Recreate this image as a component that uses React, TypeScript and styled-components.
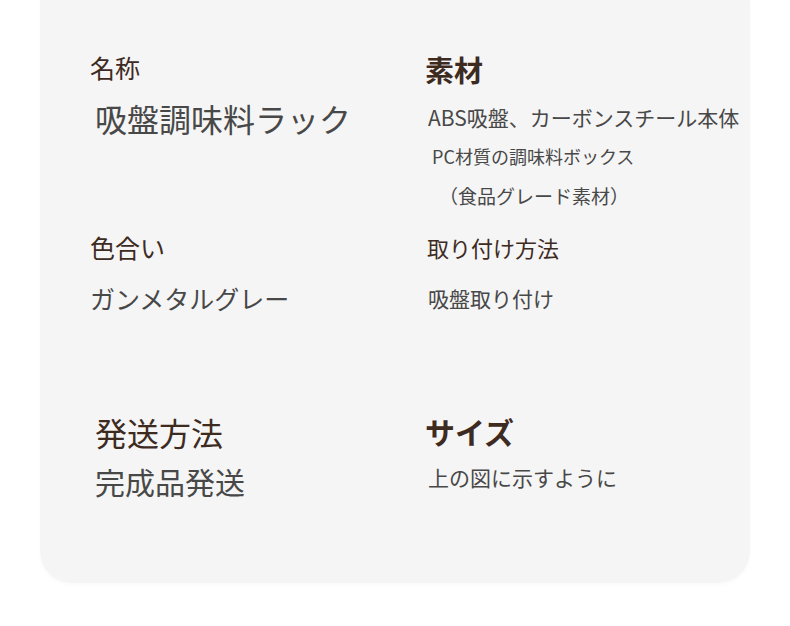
import React from 'react';
import styled, { createGlobalStyle } from 'styled-components';

const GlobalStyle = createGlobalStyle`
  html, body {
    margin: 0;
    padding: 0;
    background: #ffffff;
  }
  body {
    font-family: "Noto Sans CJK JP", "Noto Sans", sans-serif;
  }
`;

const Page = styled.div`
  width: 790px;
  height: 626px;
  overflow: hidden;
  background: #ffffff;
`;

const Card = styled.div`
  margin-left: 40px;
  width: 710px;
  height: 583px;
  box-sizing: border-box;
  padding: 56px 0 0 50px;
  background: #f5f5f5;
  border-radius: 0 0 32px 32px;
  box-shadow: 0 2px 5px rgba(0, 0, 0, 0.025);
`;

const SpecGrid = styled.div`
  display: grid;
  grid-template-columns: 335px 1fr;
  grid-template-rows: 152px 76px auto;
  row-gap: 29px;
  &> :nth-child(5), &> :nth-child(6) {
    margin-top: 74px;
  }
`;

const Cell = styled.div`
  display: flex;
  flex-direction: column;
  align-items: flex-start;
`;

const Label = styled.div<{ $size: number; $bold?: boolean; $gap?: number; $indent?: number }>`
  font-size: ${p => p.$size}px;
  line-height: ${p => p.$size}px;
  font-weight: ${p => (p.$bold ? 700 : 400)};
  color: #3e2b1f;
  margin-top: ${p => p.$gap ?? 0}px;
  margin-left: ${p => p.$indent ?? 0}px;
  white-space: nowrap;
`;

const Value = styled.div<{ $size: number; $gap: number; $indent?: number }>`
  font-size: ${p => p.$size}px;
  line-height: ${p => p.$size}px;
  color: #484848;
  margin-top: ${p => p.$gap}px;
  margin-left: ${p => p.$indent ?? 0}px;
  white-space: nowrap;
`;

export default function App() {
  return (
    <Page>
      <GlobalStyle />
      <Card>
        <SpecGrid>
          <Cell>
            <Label $size={25} $gap={-1}>名称</Label>
            <Value $size={32} $gap={22} $indent={5}>吸盤調味料ラック</Value>
          </Cell>
          <Cell>
            <Label $size={29} $bold $gap={-1}>素材</Label>
            <Value $size={21} $gap={23} $indent={3}>ABS吸盤、カーボンスチール本体</Value>
            <Value $size={18} $gap={19} $indent={7}>PC材質の調味料ボックス</Value>
            <Value $size={19} $gap={21} $indent={14}>（食品グレード素材）</Value>
          </Cell>
          <Cell>
            <Label $size={25} $gap={-2}>色合い</Label>
            <Value $size={25} $gap={26}>ガンメタルグレー</Value>
          </Cell>
          <Cell>
            <Label $size={22} $gap={-1} $indent={2}>取り付け方法</Label>
            <Value $size={21} $gap={30} $indent={3}>吸盤取り付け</Value>
          </Cell>
          <Cell>
            <Label $size={32} $indent={5}>発送方法</Label>
            <Value $size={30} $gap={18} $indent={5}>完成品発送</Value>
          </Cell>
          <Cell>
            <Label $size={30} $bold $gap={0}>サイズ</Label>
            <Value $size={21} $gap={21} $indent={3}>上の図に示すように</Value>
          </Cell>
        </SpecGrid>
      </Card>
    </Page>
  );
}
